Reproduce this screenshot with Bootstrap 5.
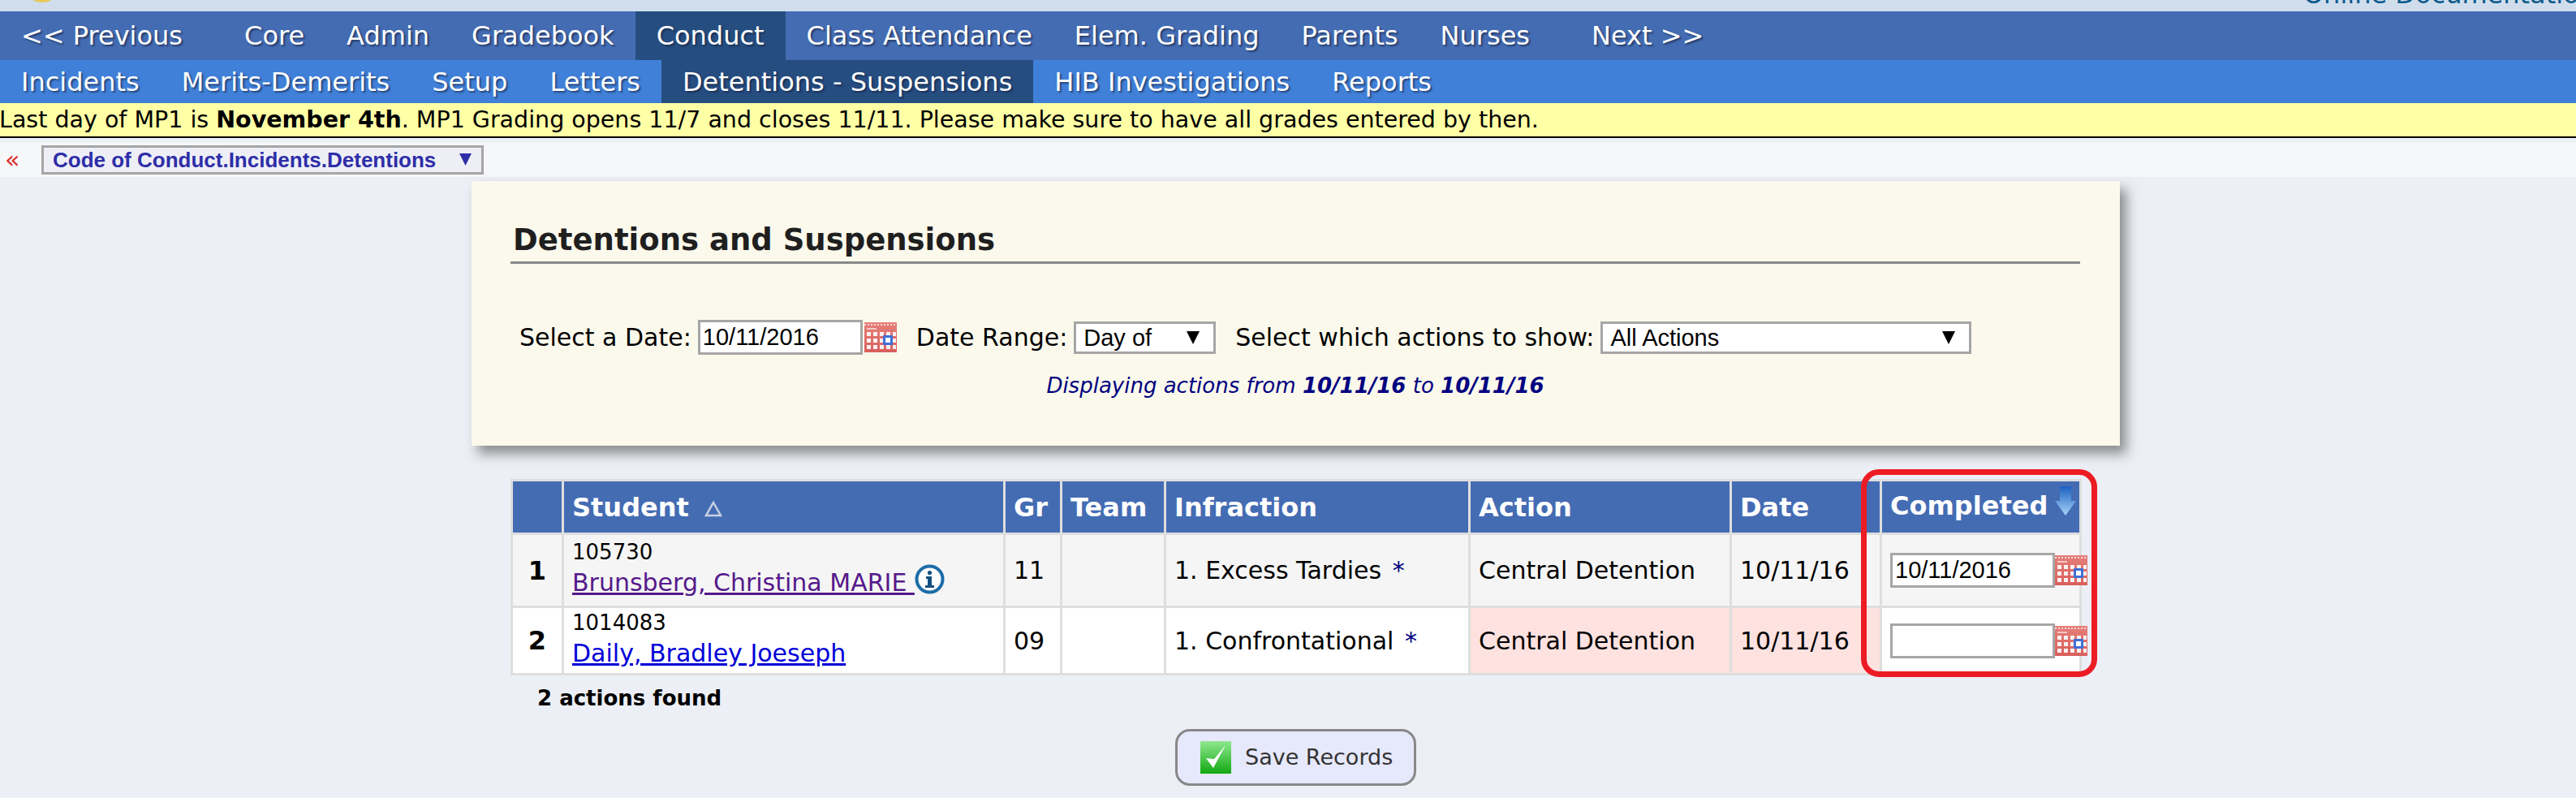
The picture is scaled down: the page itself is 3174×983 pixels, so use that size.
<!DOCTYPE html>
<html lang="en">
  <head>
    <meta charset="UTF-8" />
    <meta name="viewport" content="width=device-width, initial-scale=1.0" />
    <title>Detentions and Suspensions</title>
    <link
      rel="stylesheet"
      href="https://cdn.jsdelivr.net/npm/bootstrap@5.3.3/dist/css/bootstrap.min.css"
    />
    <style>
      body {
        background: #eceff5;
        font-family: "DejaVu Sans", Verdana, sans-serif;
        color: #000;
        overflow-x: hidden;
      }
      .top-strip {
        height: 14px;
        background: #d0dded;
        overflow: hidden;
        position: relative;
      }
      .top-strip a {
        font-size: 32px;
        line-height: 14px;
        color: #0b5a8c;
        text-decoration: none;
        white-space: nowrap;
        margin-top: -14px;
        margin-right: -24px;
        display: block;
      }
      .top-logo {
        position: absolute;
        left: 38px;
        top: -6px;
      }
      .main-nav,
      .sub-nav {
        flex-wrap: nowrap;
      }
      .main-nav {
        height: 60px;
        background: #446cb3;
        font-size: 32px;
      }
      .sub-nav {
        height: 53px;
        background: #4080d8;
        font-size: 32px;
      }
      .main-nav .nav-link,
      .sub-nav .nav-link {
        color: #fff;
        padding: 0 26px;
        display: flex;
        align-items: center;
        height: 100%;
        text-shadow: 2px 2px 2px rgba(20, 30, 60, 0.6);
        white-space: nowrap;
      }
      .main-nav .nav-link.active,
      .sub-nav .nav-link.active {
        background: #264d80;
      }
      .main-nav .nav-link.first {
        margin-right: 24px;
      }
      .main-nav .nav-link.last {
        margin-left: 24px;
      }
      .notice-bar {
        height: 43px;
        background: #ffffa6;
        border-bottom: 2px solid #000;
        font-size: 28.5px;
        line-height: 41px;
        white-space: nowrap;
        margin-left: -1px;
      }
      .crumb-bar {
        height: 43px;
        margin-top: 5px;
        background: #f6f7f9;
      }
      .crumb-back {
        color: #d83030;
        font-size: 30px;
        line-height: 1;
        width: 51px;
        padding-left: 6px;
      }
      .crumb-select.form-select {
        width: 545px;
        height: 36px;
        padding: 0 0 0 11px;
        border: 3px solid #a6a6a6;
        border-radius: 0;
        background-color: #eeeff6;
        color: #2e2ea8;
        font-family: "Liberation Sans", Arial, sans-serif;
        font-weight: 700;
        font-size: 26px;
        line-height: 30px;
        --bs-form-select-bg-img: url("data:image/svg+xml,%3csvg xmlns='http://www.w3.org/2000/svg' viewBox='0 0 16 16'%3e%3cpath fill='%232e2ea8' d='M0 0h16L8 16z'/%3e%3c/svg%3e");
        background-position: right 12px center;
        background-size: 15px 15px;
      }
      .page-body {
        width: 2031px;
        margin-left: 581px;
        margin-top: 5px;
      }
      .filter-card.card {
        height: 326px;
        background: #fbf9ec;
        border: 0;
        border-radius: 0;
        box-shadow: 8px 10px 14px rgba(60, 60, 60, 0.55);
        padding: 0 49px 0 48px;
      }
      .filter-title {
        margin: 45px 0 0;
        height: 57px;
        border-bottom: 3px solid #888;
        font-size: 37px;
        font-weight: 700;
        line-height: 56px;
        color: #1f1f1f;
        padding-left: 3px;
      }
      .filter-row {
        margin-top: 68px;
        padding-left: 11px;
        font-size: 30px;
        white-space: nowrap;
      }
      .date-input.form-control {
        width: 203px;
        height: 43px;
        padding: 0 0 0 3px;
        border: 3px solid #a6a6a6;
        border-radius: 0;
        font-family: "Liberation Sans", Arial, sans-serif;
        font-size: 29px;
        color: #000;
        background: #fff;
      }
      .pick-select.form-select {
        height: 40px;
        padding: 0 0 0 9px;
        border: 3px solid #a6a6a6;
        border-radius: 0;
        font-family: "Liberation Sans", Arial, sans-serif;
        font-size: 29px;
        line-height: 34px;
        color: #000;
        --bs-form-select-bg-img: url("data:image/svg+xml,%3csvg xmlns='http://www.w3.org/2000/svg' viewBox='0 0 16 16'%3e%3cpath fill='%23000' d='M0 0h16L8 16z'/%3e%3c/svg%3e");
        background-position: right 17px center;
        background-size: 16px 16px;
      }
      .cal-icon {
        width: 40px;
        height: 37px;
        flex: none;
        margin-left: 2px;
      }
      .range-note {
        margin-top: 19px;
        text-align: center;
        font-size: 26px;
        font-style: italic;
        color: #000080;
        line-height: 36px;
      }
      .roster-wrap {
        width: 1936px;
        margin: 41px 0 0 48px;
        position: relative;
      }
      .roster-table {
        width: 1936px;
        table-layout: fixed;
        border-collapse: separate;
        border-spacing: 3px;
        background: #dedede;
        font-size: 30px;
      }
      .roster-table th {
        height: 63px;
        background: #446cb3;
        color: #fff;
        font-size: 32px;
        font-weight: 700;
        padding: 0 10px;
        white-space: nowrap;
      }
      .roster-table td {
        padding: 0 10px;
        white-space: nowrap;
      }
      .roster-table .row-a td {
        height: 87px;
        background: #f5f5f5;
      }
      .roster-table .row-b td {
        height: 80px;
        background: #fff;
      }
      .roster-table .row-b td.late-cell {
        background: #fee2e0;
      }
      .roster-table td.row-num {
        font-weight: 700;
        text-align: center;
        font-size: 32px;
      }
      .student-id {
        font-size: 26px;
        line-height: 30px;
        display: block;
      }
      .student-link {
        font-size: 30px;
        line-height: 38px;
      }
      .student-link.seen {
        color: #551a8b;
      }
      .student-link.fresh {
        color: #0000d8;
      }
      .star-mark {
        color: #000080;
        margin-left: 4px;
      }
      .sort-head {
        vertical-align: bottom;
      }
      .sort-head .d-flex {
        padding-bottom: 9px;
      }
      .sort-arrow {
        width: 26px;
        height: 36px;
        margin: 0 0 12px 9px;
        flex: none;
      }
      .red-ring {
        position: absolute;
        left: 1664px;
        top: -12px;
        width: 291px;
        height: 256px;
        border: 7px solid #ed1c24;
        border-radius: 22px;
        pointer-events: none;
      }
      .found-note {
        font-size: 26px;
        font-weight: 700;
        line-height: 36px;
        margin: 10px 0 0 81px;
      }
      .save-btn.btn {
        width: 297px;
        height: 70px;
        margin-top: 20px;
        padding: 0 0 0 28px;
        background: #e6e8fb;
        border: 3px solid #888;
        border-radius: 18px;
        color: #333;
        font-size: 27px;
        gap: 17px;
      }
    </style>
  </head>

  <body>
    <svg width="0" height="0" class="position-absolute">
      <defs>
        <linearGradient id="calFill" x1="0" y1="0" x2="0" y2="1">
          <stop offset="0" stop-color="#e67f7a" />
          <stop offset="1" stop-color="#d85f5c" />
        </linearGradient>
        <linearGradient id="arrowFill" x1="0" y1="0" x2="0" y2="1">
          <stop offset="0" stop-color="#1b5fc0" />
          <stop offset="1" stop-color="#a8d4f8" />
        </linearGradient>
        <linearGradient id="checkFill" x1="0" y1="0" x2="0" y2="1">
          <stop offset="0" stop-color="#8fe88f" />
          <stop offset="1" stop-color="#12a812" />
        </linearGradient>
        <symbol id="calendar" viewBox="0 0 40 37">
          <rect width="40" height="37" fill="url(#calFill)" />
          <path d="M0 3h40" stroke="#fff" stroke-width="2" stroke-dasharray="2 2" opacity=".7" />
          <path d="M3 8h12" stroke="#fff" stroke-width="2" opacity=".6" />
          <g fill="#fff" opacity=".9">
            <rect x="3" y="12" width="5" height="5" />
            <rect x="11" y="12" width="5" height="5" />
            <rect x="19" y="12" width="5" height="5" />
            <rect x="27" y="12" width="5" height="5" />
            <rect x="35" y="12" width="4" height="5" />
            <rect x="3" y="20" width="5" height="5" />
            <rect x="11" y="20" width="5" height="5" />
            <rect x="19" y="20" width="5" height="5" />
            <rect x="35" y="20" width="4" height="5" />
            <rect x="3" y="28" width="5" height="5" />
            <rect x="11" y="28" width="5" height="5" />
            <rect x="19" y="28" width="5" height="5" />
            <rect x="27" y="28" width="5" height="5" />
            <rect x="35" y="28" width="4" height="5" />
          </g>
          <rect x="24.5" y="17.5" width="9" height="9" fill="#fff" stroke="#3f6fd8" stroke-width="3" />
        </symbol>
      </defs>
    </svg>

    <header>
      <div class="top-strip d-flex justify-content-end">
        <svg class="top-logo" width="28" height="10" viewBox="0 0 28 10">
          <ellipse cx="14" cy="3" rx="13" ry="6" fill="#e8c85a" />
        </svg>
        <a href="#">Online Documentation</a>
      </div>
      <nav class="nav main-nav">
        <a class="nav-link first" href="#">&lt;&lt; Previous</a>
        <a class="nav-link" href="#">Core</a>
        <a class="nav-link" href="#">Admin</a>
        <a class="nav-link" href="#">Gradebook</a>
        <a class="nav-link active" href="#">Conduct</a>
        <a class="nav-link" href="#">Class Attendance</a>
        <a class="nav-link" href="#">Elem. Grading</a>
        <a class="nav-link" href="#">Parents</a>
        <a class="nav-link" href="#">Nurses</a>
        <a class="nav-link last" href="#">Next &gt;&gt;</a>
      </nav>
      <nav class="nav sub-nav">
        <a class="nav-link" href="#">Incidents</a>
        <a class="nav-link" href="#">Merits-Demerits</a>
        <a class="nav-link" href="#">Setup</a>
        <a class="nav-link" href="#">Letters</a>
        <a class="nav-link active" href="#">Detentions - Suspensions</a>
        <a class="nav-link" href="#">HIB Investigations</a>
        <a class="nav-link" href="#">Reports</a>
      </nav>
      <div class="notice-bar">
        Last day of MP1 is <strong>November 4th</strong>. MP1 Grading opens
        11/7 and closes 11/11. Please make sure to have all grades entered by
        then.
      </div>
      <div class="crumb-bar d-flex align-items-center">
        <span class="crumb-back">&laquo;</span>
        <select class="form-select crumb-select">
          <option>Code of Conduct.Incidents.Detentions</option>
        </select>
      </div>
    </header>

    <main class="page-body">
      <section class="card filter-card">
        <h2 class="filter-title">Detentions and Suspensions</h2>
        <div class="filter-row d-flex align-items-center">
          <span class="me-2">Select a Date:</span>
          <input class="form-control date-input" type="text" value="10/11/2016" />
          <svg class="cal-icon"><use href="#calendar" /></svg>
          <span class="ms-4 me-2">Date Range:</span>
          <select class="form-select pick-select" style="width: 175px">
            <option>Day of</option>
          </select>
          <span class="ms-4 me-2">Select which actions to show:</span>
          <select class="form-select pick-select" style="width: 457px">
            <option>All Actions</option>
          </select>
        </div>
        <p class="range-note mb-0">
          Displaying actions from <strong>10/11/16</strong> to
          <strong>10/11/16</strong>
        </p>
      </section>

      <div class="roster-wrap">
        <table class="roster-table">
          <colgroup>
            <col style="width: 60px" />
            <col style="width: 541px" />
            <col style="width: 67px" />
            <col style="width: 125px" />
            <col style="width: 372px" />
            <col style="width: 319px" />
            <col style="width: 182px" />
            <col />
          </colgroup>
          <thead>
            <tr>
              <th></th>
              <th>
                Student
                <svg width="22" height="20" viewBox="0 0 22 20" class="ms-2">
                  <path d="M11 2 20 18H2z" fill="none" stroke="#c7d0e4" stroke-width="2.5" />
                </svg>
              </th>
              <th>Gr</th>
              <th>Team</th>
              <th>Infraction</th>
              <th>Action</th>
              <th>Date</th>
              <th class="sort-head">
                <div class="d-flex align-items-end">
                  <span>Completed</span>
                  <svg class="sort-arrow" viewBox="0 0 26 36">
                    <path d="M6 0h14v18h6L13 36 0 18h6z" fill="url(#arrowFill)" />
                  </svg>
                </div>
              </th>
            </tr>
          </thead>
          <tbody id="rosterRows"></tbody>
        </table>
        <div class="red-ring"></div>
      </div>

      <p class="found-note mb-0">2 actions found</p>

      <div class="d-flex justify-content-center">
        <button type="button" class="btn save-btn d-flex align-items-center">
          <svg width="38" height="40" viewBox="0 0 38 40">
            <rect width="38" height="40" fill="url(#checkFill)" />
            <path d="M7 21 16 33 31 5 17 22z" fill="#fff" />
          </svg>
          Save Records
        </button>
      </div>
    </main>

    <script src="https://cdn.jsdelivr.net/npm/bootstrap@5.3.3/dist/js/bootstrap.bundle.min.js"></script>
    <script>
      const rows = [
        {
          num: 1,
          id: "105730",
          name: "Brunsberg, Christina MARIE ",
          linkClass: "seen",
          info: true,
          grade: "11",
          infraction: "1. Excess Tardies",
          date: "10/11/16",
          completed: "10/11/2016",
          rowClass: "row-a",
          late: "",
        },
        {
          num: 2,
          id: "1014083",
          name: "Daily, Bradley Joeseph",
          linkClass: "fresh",
          info: false,
          grade: "09",
          infraction: "1. Confrontational",
          date: "10/11/16",
          completed: "",
          rowClass: "row-b",
          late: "late-cell",
        },
      ];

      const infoIcon = `<svg width="37" height="37" viewBox="0 0 37 37" class="align-top">
        <circle cx="18.5" cy="18.5" r="16" fill="#fff" stroke="#1c6ca8" stroke-width="4" />
        <circle cx="18.5" cy="10.5" r="2.6" fill="#14507f" />
        <path d="M14 15h7v11h3v3H13v-3h3v-8h-2z" fill="#14507f" />
      </svg>`;

      const rosterRows = document.querySelector("#rosterRows");
      for (let i = 0; i < rows.length; i++) {
        const r = rows[i];
        const tr = document.createElement("tr");
        tr.className = r.rowClass;
        tr.innerHTML = `
          <td class="row-num">${r.num}</td>
          <td>
            <span class="student-id">${r.id}</span>
            <a href="#" class="student-link ${r.linkClass}">${r.name.replace(/ $/, "&nbsp;")}</a>${r.info ? infoIcon : ""}
          </td>
          <td>${r.grade}</td>
          <td></td>
          <td>${r.infraction} <span class="star-mark">*</span></td>
          <td class="${r.late}">Central Detention</td>
          <td class="${r.late}">${r.date}</td>
          <td>
            <div class="d-flex align-items-center">
              <input class="form-control date-input" type="text" value="${r.completed}" />
              <svg class="cal-icon ms-0"><use href="#calendar" /></svg>
            </div>
          </td>`;
        rosterRows.appendChild(tr);
      }
    </script>
  </body>
</html>
